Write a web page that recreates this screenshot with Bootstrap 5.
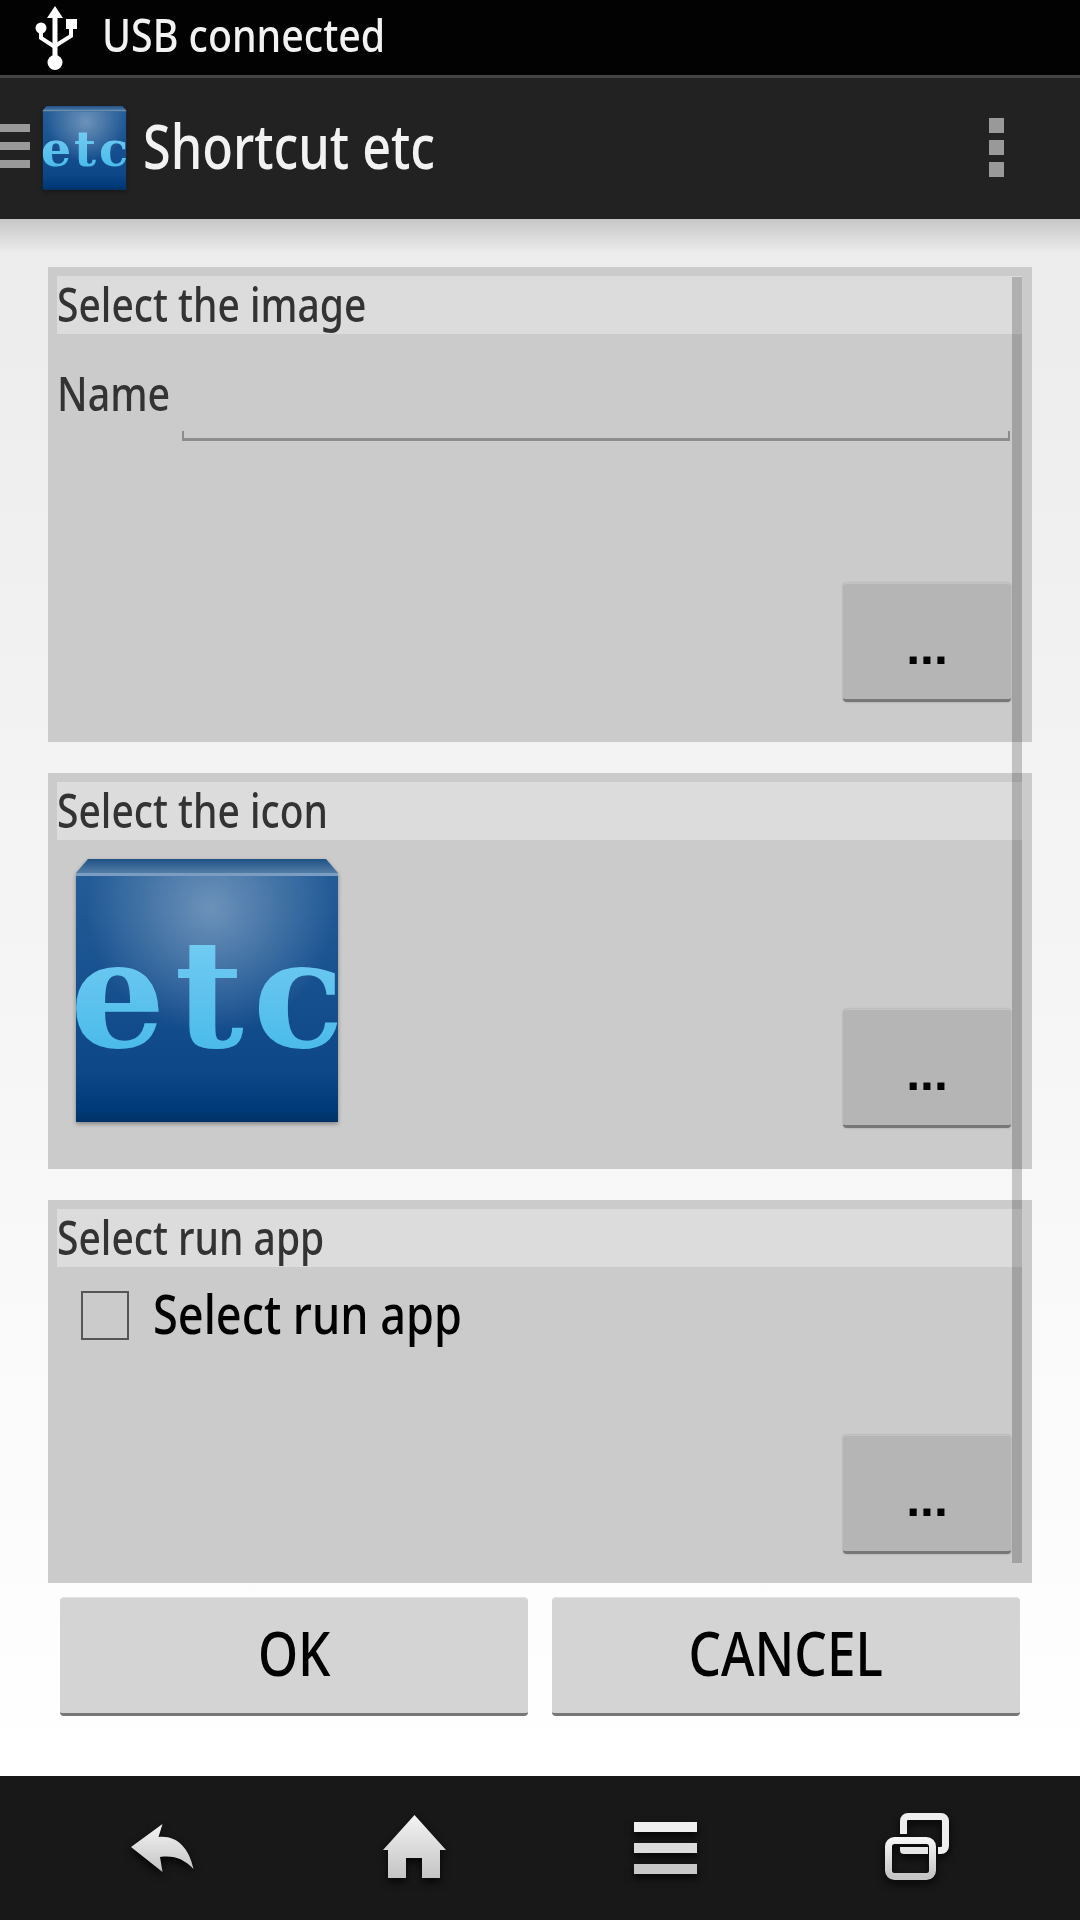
<!DOCTYPE html>
<html lang="en">
<head>
    <meta charset="UTF-8">
    <meta name="viewport" content="width=device-width, initial-scale=1.0">
    <title>Shortcut etc</title>
    <link rel="stylesheet" href="https://cdn.jsdelivr.net/npm/bootstrap@5.3.0/dist/css/bootstrap.min.css">
    <style>
        body { width: 1080px; height: 1920px; overflow: hidden; font-family: "Noto Sans", "Open Sans", sans-serif; font-weight: 500; background: #fff; }
        .squeeze { display: inline-block; transform: scaleX(.84); transform-origin: left center; white-space: nowrap; }

        .status-bar { height: 78px; background: #020202; border-bottom: 3px solid #444; padding-left: 35px; color: #f2f2f2; font-size: 46px; line-height: 1; }
        .status-bar svg { margin-right: 25px; }
        .status-bar .squeeze { padding-bottom: 8px; transform: scaleX(.855); }
        .action-bar { height: 141px; background: #222; padding-right: 76px; }
        .up-bars { width: 30px; margin-right: 12px; }
        .up-bars i { display: block; height: 8px; margin: 5px 0 10px; background: #999; }
        .up-bars i + i { margin-top: 0; }
        .action-bar .etc-icon { margin-bottom: 2px; }
        .app-title.squeeze { margin-left: 16px; padding-bottom: 6px; color: #f2f2f2; font-size: 61px; line-height: 1; transform: scaleX(.825); }
        .overflow-dots { padding-bottom: 2px; }
        .overflow-dots i { display: block; width: 15px; height: 15px; margin: 7px 0; background: #999; }

        .content { height: 1557px; padding: 48px 48px 0; background:
            linear-gradient(rgba(0,0,0,.16), rgba(0,0,0,0) 34px),
            linear-gradient(#ececec, #fff); }
        .scroll-thumb { position: absolute; left: 1012px; top: 277px; width: 10px; height: 1286px; background: rgba(0,0,0,.2); }

        .panel-box { background: #cbcbcb; padding: 9px 10px 0 9px; }
        .panel-box + .panel-box { margin-top: 31px; }
        .panel-head { height: 58px; background: #dcdcdc; color: #333; font-size: 47px; line-height: 56px; }
        .panel-head .squeeze { transform: scaleX(.83); }
        .pane-one { height: 475px; }
        .pane-two { height: 396px; }
        .pane-three { height: 383px; }

        .name-row { height: 107px; }
        .name-label { width: 125px; color: #333; font-size: 47px; line-height: 1; padding-top: 12px; }
        .name-input.form-control { width: 828px; height: 107px; padding: 0; border: 0; border-radius: 0; box-shadow: none; background:
            linear-gradient(#8c8c8c, #8c8c8c) left bottom / 100% 3px no-repeat,
            linear-gradient(#8c8c8c, #8c8c8c) left bottom / 2px 10px no-repeat,
            linear-gradient(#8c8c8c, #8c8c8c) right bottom / 2px 10px no-repeat; }

        .dots-btn.btn { width: 168px; height: 119px; padding: 10px 0 0; margin-right: 11px; background: #b5b5b5; border: 0; border-top: 1px solid #c4c4c4; border-bottom: 3px solid #777; border-radius: 4px; box-shadow: 0 0 2px rgba(0,0,0,.25); color: #000; font-family: "Liberation Sans", sans-serif; font-weight: 700; font-size: 50px; line-height: 1; }
        .spacer-one { margin-top: 142px; }
        .icon-row { padding: 19px 0 0 19px; }
        .big-icon { display: block; margin-bottom: 6px; }
        .etc-icon { filter: drop-shadow(0 2px 2px rgba(0,0,0,.35)); }
        .spacer-three { margin-top: 85px; }

        .run-row { padding: 24px 0 0 24px; height: 83px; }
        .run-box { width: 48px; height: 49px; border: 2px solid #555; flex-shrink: 0; }
        .run-label.squeeze { margin-left: 24px; color: #000; font-size: 54px; line-height: 45px; transform: scaleX(.835); }

        .actions { margin: 14px -48px 0; padding: 0 60px; gap: 24px; }
        .wide-btn.btn { flex: 1 1 0; height: 119px; padding: 0 0 6px; background: #d4d4d4; border: 0; border-top: 1px solid #e2e2e2; border-bottom: 3px solid #777; border-radius: 4px; color: #000; font-size: 61px; font-weight: 500; line-height: 1; }
        .wide-btn .squeeze { transform-origin: center center; }

        .nav-strip { height: 144px; background: #181818; padding-left: 131px; }
        .nav-strip svg { filter: drop-shadow(0 4px 4px rgba(0,0,0,.8)); }
        .nav-home { margin-left: 189px; margin-bottom: 3px; }
        .nav-menu { margin-left: 188px; }
        .nav-recent { margin-left: 188px; margin-bottom: 3px; }
    </style>
</head>
<body>
    <div class="status-bar d-flex align-items-center">
        <svg width="42" height="64" viewBox="35 5 42 64">
            <path d="M55 5l8 12h-5.500v38h-5V17H47z" fill="#fff"/>
            <circle cx="55" cy="61.500" r="7.500" fill="#fff"/>
            <circle cx="41" cy="27" r="5.500" fill="#fff"/>
            <rect x="66" y="18" width="11" height="10" fill="#fff"/>
            <path d="M41 28v9l14 9M71 27v8l-16 10" fill="none" stroke="#fff" stroke-width="4"/>
        </svg>
        <span class="squeeze">USB connected</span>
    </div>

    <div class="action-bar d-flex align-items-center">
        <div class="up-bars"><i></i><i></i><i></i></div>
        <svg class="etc-icon" width="85" height="84" viewBox="0 0 262 263">
            <defs>
                <linearGradient id="cubeBase" x1="0" y1="0" x2="0" y2="1">
                    <stop offset="0" stop-color="#235c97"/>
                    <stop offset=".8" stop-color="#0d4788"/>
                    <stop offset=".95" stop-color="#003a78"/>
                    <stop offset="1" stop-color="#013264"/>
                </linearGradient>
                <radialGradient id="cubeGlow" gradientUnits="userSpaceOnUse" cx="135" cy="50" r="125">
                    <stop offset="0" stop-color="#7a9cc0" stop-opacity=".85"/>
                    <stop offset="1" stop-color="#7a9cc0" stop-opacity="0"/>
                </radialGradient>
                <linearGradient id="cubeLid" x1="0" y1="0" x2="0" y2="1">
                    <stop offset="0" stop-color="#1f5184"/>
                    <stop offset="1" stop-color="#5d86ad"/>
                </linearGradient>
                <linearGradient id="cubeText" x1="0" y1="0" x2="0" y2="1">
                    <stop offset="0" stop-color="#7ed0f4"/>
                    <stop offset="1" stop-color="#3fb6e8"/>
                </linearGradient>
                <symbol id="etcCube" viewBox="0 0 262 263">
                    <path d="M12 0H250L262 14V17H0V14z" fill="url(#cubeLid)"/>
                    <rect y="14" width="262" height="3" fill="#7c9dc2"/>
                    <rect y="17" width="262" height="246" fill="url(#cubeBase)"/>
                    <rect y="17" width="262" height="246" fill="url(#cubeGlow)"/>
                    <text x="-6" y="188" font-family="DejaVu Serif" font-weight="700" font-size="150" textLength="274" lengthAdjust="spacing" fill="url(#cubeText)">etc</text>
                </symbol>
                <linearGradient id="navFill" x1="0" y1="0" x2="0" y2="1">
                    <stop offset="0" stop-color="#f4f4f4"/>
                    <stop offset="1" stop-color="#c4c4c4"/>
                </linearGradient>
            </defs>
            <use href="#etcCube"/>
        </svg>
        <span class="app-title squeeze">Shortcut etc</span>
        <div class="overflow-dots ms-auto"><i></i><i></i><i></i></div>
    </div>

    <div class="content">
        <div class="panel-box pane-one">
            <div class="panel-head"><span class="squeeze">Select the image</span></div>
            <div class="name-row d-flex align-items-center">
                <div class="name-label"><span class="squeeze">Name</span></div>
                <input type="text" class="name-input form-control" aria-label="Name">
            </div>
            <div class="d-flex justify-content-end spacer-one">
                <button type="button" class="dots-btn btn">...</button>
            </div>
        </div>

        <div class="panel-box pane-two">
            <div class="panel-head"><span class="squeeze">Select the icon</span></div>
            <div class="icon-row d-flex justify-content-between align-items-end">
                <svg class="big-icon etc-icon" width="262" height="263" viewBox="0 0 262 263"><use href="#etcCube"/></svg>
                <button type="button" class="dots-btn btn">...</button>
            </div>
        </div>

        <div class="panel-box pane-three">
            <div class="panel-head"><span class="squeeze">Select run app</span></div>
            <div class="run-row d-flex align-items-start">
                <div class="run-box"></div>
                <span class="run-label squeeze">Select run app</span>
            </div>
            <div class="d-flex justify-content-end spacer-three">
                <button type="button" class="dots-btn btn">...</button>
            </div>
        </div>

        <div class="actions d-flex">
            <button type="button" class="wide-btn btn"><span class="squeeze">OK</span></button>
            <button type="button" class="wide-btn btn"><span class="squeeze">CANCEL</span></button>
        </div>
    </div>

    <div class="scroll-thumb"></div>

    <div class="nav-strip d-flex align-items-center">
        <svg width="63" height="48" viewBox="0 0 63 48">
            <path d="M0 23L31.500 0L27.500 13C45 11 58 23 62.500 45C53 35 43 31 29 33L31.500 48z" fill="url(#navFill)"/>
        </svg>
        <svg class="nav-home" width="63" height="63" viewBox="0 0 63 63">
            <path d="M31.500 0L63 35H57V63H39V43H23V63H5V35H0z" fill="url(#navFill)"/>
        </svg>
        <svg class="nav-menu" width="63" height="52" viewBox="0 0 63 52">
            <rect width="63" height="10" fill="#f0f0f0"/>
            <rect y="21" width="63" height="10" fill="#dcdcdc"/>
            <rect y="42" width="63" height="10" fill="#c8c8c8"/>
        </svg>
        <svg class="nav-recent" width="64" height="67" viewBox="0 0 64 67">
            <path d="M18.500 21V8a4.500 4.500 0 0 1 4.500-4.500H56a4.500 4.500 0 0 1 4.500 4.500V33a4.500 4.500 0 0 1-4.500 4.500H53" fill="none" stroke="#eee" stroke-width="7"/>
            <path d="M15 34v3a4 4 0 0 0 4 4h24v-7z" fill="#e6e6e6"/>
            <rect x="3.500" y="27.500" width="44" height="36" rx="6" fill="none" stroke="url(#navFill)" stroke-width="7"/>
        </svg>
    </div>

    <script src="https://cdn.jsdelivr.net/npm/bootstrap@5.3.0/dist/js/bootstrap.bundle.min.js"></script>
</body>
</html>
